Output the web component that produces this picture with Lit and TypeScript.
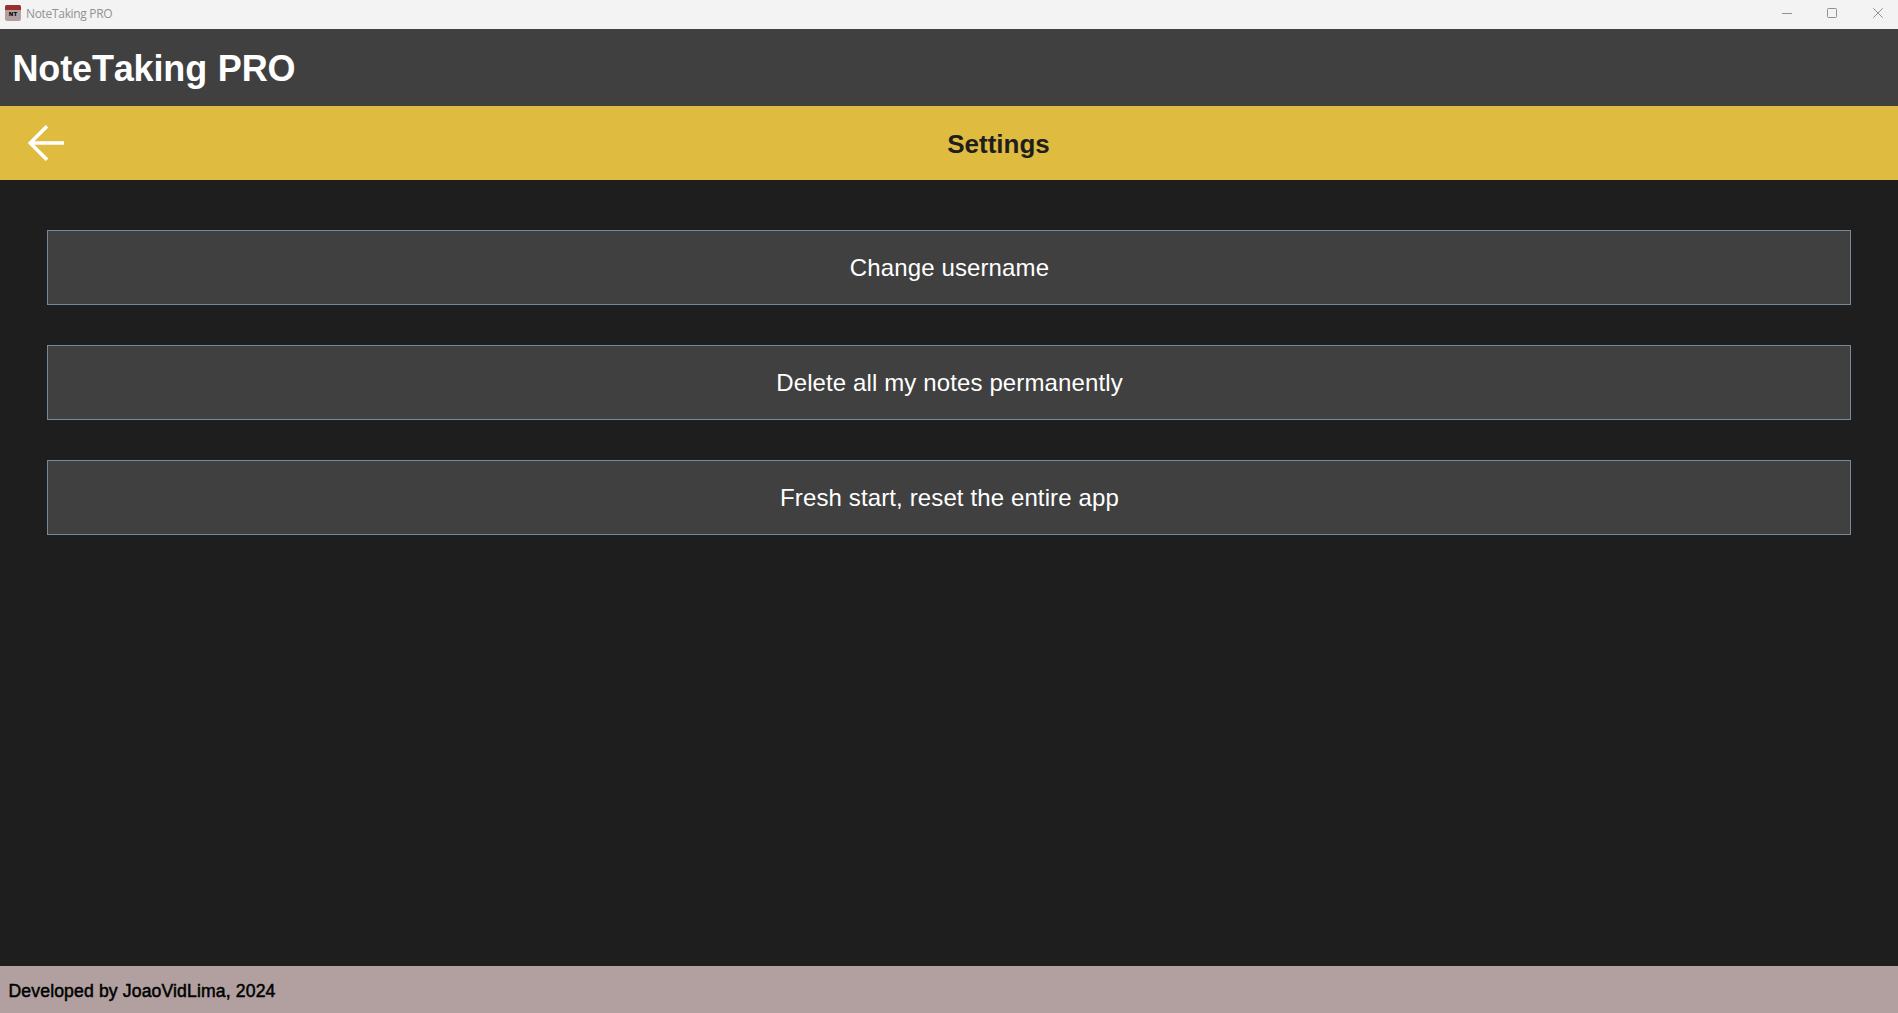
import { LitElement, html, css } from "lit";
import { customElement, state } from "lit/decorators.js";

interface Action { label: string; cls: string; }

@customElement("app-root")
export class AppRoot extends LitElement {
  static styles = css`
    :host {
      display: flex; flex-direction: column; width: 100%; height: 100vh;
      background: #1e1e1e; overflow: hidden;
      font-family: "Liberation Sans", Arial, sans-serif;
    }
    svg { display: block; flex: none; }
    .titlebar {
      flex: none; height: 29px; box-sizing: border-box; background: #f3f3f3;
      display: flex; align-items: flex-start; padding-left: 5px;
    }
    .app-icon {
      width: 16px; height: 16px; margin-top: 5px; border-radius: 2px; overflow: hidden;
      background: #b1a09f; display: flex; flex-direction: column; align-items: center;
    }
    .app-icon-top { width: 16px; height: 5px; background: #983030; }
    .app-icon-text { font: bold 5.5px/8px "DejaVu Sans", sans-serif; color: #000; }
    .window-name {
      flex: 1; margin-left: 5px; color: #929292; white-space: nowrap;
      font: 12px/28px "Open Sans", "Noto Sans", sans-serif; letter-spacing: -0.32px;
    }
    .window-buttons { display: flex; padding-right: 14px; gap: 35px; margin-top: 8px; }
    .header {
      flex: none; height: 77px; box-sizing: border-box; background: #404040;
      display: flex; align-items: center; padding: 2px 0 0 12.5px;
    }
    .brand {
      margin: 0; color: #fff; font-size: 36px; line-height: 42px; white-space: nowrap;
      font-kerning: none; letter-spacing: -0.15px; word-spacing: 1px;
    }
    .toolbar { flex: none; height: 74px; background: #dfbc3f; display: flex; align-items: center; }
    .back { border: 0; padding: 0; margin: 0 0 0 28px; background: none; width: 36px; height: 36px; }
    .page-title {
      flex: 1; margin: 2px 0 0 35px; text-align: center; color: #1e1e1e;
      font-size: 26px; line-height: 30px;
    }
    .content { flex: 1; display: flex; flex-direction: column; gap: 40px; padding: 50px 47px 0; }
    .action {
      height: 75px; box-sizing: border-box; border: 1px solid #778899; border-radius: 0;
      background: #404040; color: #fff; padding: 0 0 0 1px; letter-spacing: 0.12px;
      font: 24px/28px "Liberation Sans", Arial, sans-serif;
    }
    .footer {
      flex: none; height: 47px; box-sizing: border-box; background: #b1a09f; color: #000; display: flex;
      align-items: center; padding: 4px 0 0 8.5px; font-size: 17.6px; white-space: nowrap;
      letter-spacing: 0.14px; -webkit-text-stroke: 0.5px #000;
    }
  `;

  @state() private actions: Action[] = [
    { label: "Change username", cls: "username" },
    { label: "Delete all my notes permanently", cls: "delete" },
    { label: "Fresh start, reset the entire app", cls: "reset" },
  ];

  render() {
    return html`
      <div class="titlebar">
        <div class="app-icon"><div class="app-icon-top"></div><span class="app-icon-text">NT</span></div>
        <span class="window-name">NoteTaking PRO</span>
        <div class="window-buttons">
          <svg width="11" height="11" viewBox="0 0 11 11"><path d="M1 5.5h10" stroke="#929292"/></svg>
          <svg width="11" height="11" viewBox="0 0 11 11"><rect x="0.5" y="0.5" width="9" height="9" rx="0.8" fill="none" stroke="#929292"/></svg>
          <svg width="11" height="11" viewBox="0 0 11 11"><path d="M0.3 0.3l9.4 9.4M9.7 0.3L0.3 9.7" stroke="#929292"/></svg>
        </div>
      </div>
      <header class="header"><h1 class="brand">NoteTaking PRO</h1></header>
      <div class="toolbar">
        <button class="back" aria-label="Back">
          <svg width="36" height="36" viewBox="0 0 36 36"><path d="M19 1.2L2.2 18L19 34.8M2.2 18H36" fill="none" stroke="#fff" stroke-width="3.6"/></svg>
        </button>
        <h2 class="page-title">Settings</h2>
      </div>
      <main class="content">
        ${this.actions.map((a) => html`<button class="action ${a.cls}">${a.label}</button>`)}
      </main>
      <footer class="footer"><span class="credit">Developed by JoaoVidLima, 2024</span></footer>
    `;
  }
}
